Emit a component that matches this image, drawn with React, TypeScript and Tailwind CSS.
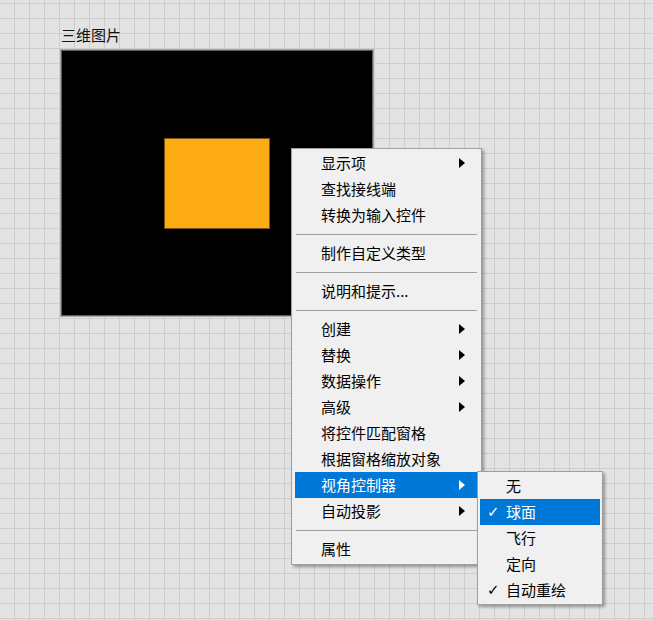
import React from "react";

type Item = { label: string; arrow?: boolean; active?: boolean } | "sep";

const menuItems: Item[] = [
  { label: "显示项", arrow: true },
  { label: "查找接线端" },
  { label: "转换为输入控件" },
  "sep",
  { label: "制作自定义类型" },
  "sep",
  { label: "说明和提示..." },
  "sep",
  { label: "创建", arrow: true },
  { label: "替换", arrow: true },
  { label: "数据操作", arrow: true },
  { label: "高级", arrow: true },
  { label: "将控件匹配窗格" },
  { label: "根据窗格缩放对象" },
  { label: "视角控制器", arrow: true, active: true },
  { label: "自动投影", arrow: true },
  "sep",
  { label: "属性" },
];

const subItems = [
  { label: "无" },
  { label: "球面", checked: true, active: true },
  { label: "飞行" },
  { label: "定向" },
  { label: "自动重绘", checked: true },
];

const Arrow = ({ white }: { white?: boolean }) => (
  <svg width="6" height="10" viewBox="0 0 6 10">
    <path d="M0 0 L6 5 L0 10 Z" fill={white ? "#ffffff" : "#000000"} />
  </svg>
);

export default function App() {
  return (
    <div className="relative w-[653px] h-[620px] overflow-hidden bg-[#e3e3e3] bg-[linear-gradient(to_right,#cdcdcd_1px,transparent_1px),linear-gradient(to_bottom,#cdcdcd_1px,transparent_1px)] bg-[size:15px_15px] bg-[position:14px_3px] font-['Noto_Sans_CJK_SC',sans-serif]">
      {/* picture control */}
      <div className="absolute left-[60px] top-[27px] flex flex-col gap-[6px]">
        <div className="pl-[1px] text-[15px] leading-[16px] text-[#111]">三维图片</div>
        <div className="w-[314px] h-[268px] border border-[#a8a8a8]">
          <div className="w-full h-full border border-[#5e5e5e] bg-black pl-[102px] pt-[87px]">
            <div className="w-[106px] h-[91px] bg-[#fdab13] border border-[#7a5410]" />
          </div>
        </div>
      </div>

      {/* context menu */}
      <div className="absolute left-[291px] top-[148px] w-[191px] flex flex-col bg-[#f0f0f0] border border-[#a0a0a0] px-[3px] pt-[1px] pb-[2px] shadow-[2px_2px_3px_rgba(0,0,0,0.35)] text-[15px] leading-[16px]">
        {menuItems.map((it, i) =>
          it === "sep" ? (
            <div key={i} className="h-[12px] flex items-center px-[1px]">
              <div className="w-full h-px bg-[#a0a0a0]" />
            </div>
          ) : (
            <div
              key={i}
              className={`h-[26px] flex items-center justify-between pl-[26px] pr-[13px] ${
                it.active ? "bg-[#0078d7] text-white" : "text-black"
              }`}
            >
              <span>{it.label}</span>
              {it.arrow && <Arrow white={it.active} />}
            </div>
          )
        )}
      </div>

      {/* submenu */}
      <div className="absolute left-[477px] top-[471px] w-[126px] flex flex-col bg-[#f0f0f0] border border-[#a0a0a0] px-[2px] py-[1px] shadow-[2px_2px_3px_rgba(0,0,0,0.35)] text-[15px] leading-[16px]">
        {subItems.map((it, i) => (
          <div
            key={i}
            className={`h-[26px] flex items-center pl-[7px] ${
              it.active ? "bg-[#0078d7] text-white" : "text-black"
            }`}
          >
            <span className="w-[19px] text-[15px] leading-[16px] font-['DejaVu_Sans',sans-serif]">
              {it.checked ? "✓" : ""}
            </span>
            <span>{it.label}</span>
          </div>
        ))}
      </div>
    </div>
  );
}
